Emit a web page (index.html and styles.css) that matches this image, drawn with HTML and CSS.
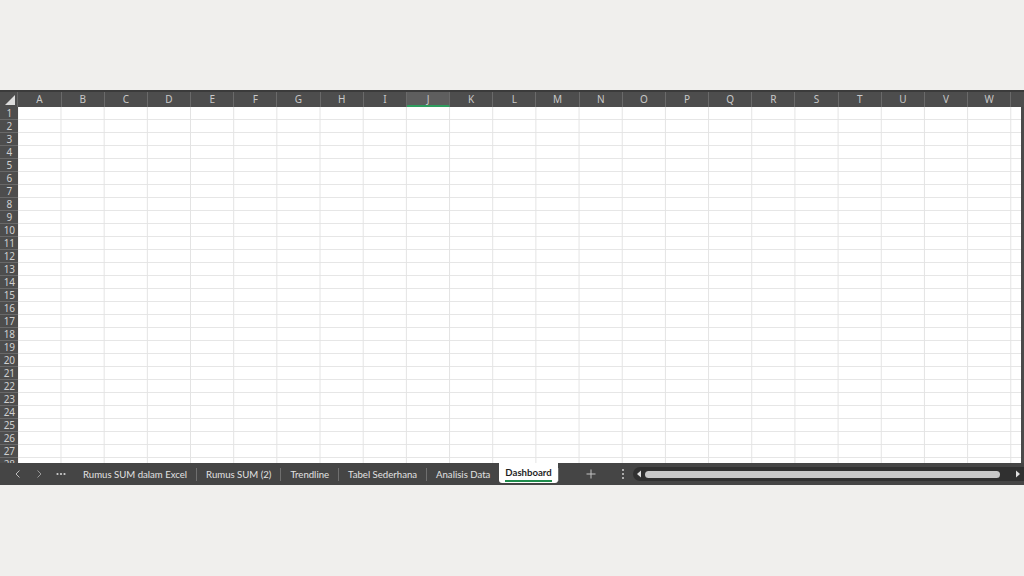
FILE: index.html
```html
<!DOCTYPE html>
<html>
<head>
<meta charset="utf-8">
<link rel="stylesheet" href="styles.css">
</head>
<body>
<div class="window">
  <div class="sheet">
    <div class="colheads">
      <div class="corner"><span class="tri"></span></div>
      <div class="ch">A</div><div class="ch">B</div><div class="ch">C</div><div class="ch">D</div>
      <div class="ch">E</div><div class="ch">F</div><div class="ch">G</div><div class="ch">H</div>
      <div class="ch">I</div><div class="ch sel">J</div><div class="ch">K</div><div class="ch">L</div>
      <div class="ch">M</div><div class="ch">N</div><div class="ch">O</div><div class="ch">P</div>
      <div class="ch">Q</div><div class="ch">R</div><div class="ch">S</div><div class="ch">T</div>
      <div class="ch">U</div><div class="ch">V</div><div class="ch">W</div><div class="ch"></div>
    </div>
    <div class="body">
      <div class="rowheads">
        <div class="rh">1</div><div class="rh">2</div><div class="rh">3</div><div class="rh">4</div>
        <div class="rh">5</div><div class="rh">6</div><div class="rh">7</div><div class="rh">8</div>
        <div class="rh">9</div><div class="rh">10</div><div class="rh">11</div><div class="rh">12</div>
        <div class="rh">13</div><div class="rh">14</div><div class="rh">15</div><div class="rh">16</div>
        <div class="rh">17</div><div class="rh">18</div><div class="rh">19</div><div class="rh">20</div>
        <div class="rh">21</div><div class="rh">22</div><div class="rh">23</div><div class="rh">24</div>
        <div class="rh">25</div><div class="rh">26</div><div class="rh">27</div><div class="rh">28</div>
      </div>
      <div class="cells"></div>
      <div class="vedge"></div>
    </div>
  </div>
  <div class="tabbar">
    <div class="nav">
      <span class="navbtn">
        <svg width="8" height="10" viewBox="0 0 8 10"><path d="M5.5 1.5 L2 5 L5.5 8.5" fill="none" stroke="#bdbdbd" stroke-width="1"/></svg>
      </span>
      <span class="navbtn">
        <svg width="8" height="10" viewBox="0 0 8 10"><path d="M2.5 1.5 L6 5 L2.5 8.5" fill="none" stroke="#9a9a9a" stroke-width="1"/></svg>
      </span>
      <span class="navbtn dots">
        <svg width="10" height="4" viewBox="0 0 10 4"><circle cx="1.5" cy="2" r="1.1" fill="#d0d0d0"/><circle cx="5" cy="2" r="1.1" fill="#d0d0d0"/><circle cx="8.5" cy="2" r="1.1" fill="#d0d0d0"/></svg>
      </span>
    </div>
    <div class="tabs">
      <span class="tab">Rumus SUM dalam Excel</span>
      <span class="sep"></span>
      <span class="tab">Rumus SUM (2)</span>
      <span class="sep"></span>
      <span class="tab">Trendline</span>
      <span class="sep"></span>
      <span class="tab">Tabel Sederhana</span>
      <span class="sep"></span>
      <span class="tab">Analisis Data</span>
      <span class="tab active"><span class="lbl">Dashboard</span></span>
      <span class="sep"></span>
    </div>
    <div class="add">
      <svg width="10" height="10" viewBox="0 0 10 10"><path d="M5 0.5 V9.5 M0.5 5 H9.5" stroke="#c4c4c4" stroke-width="1"/></svg>
    </div>
    <div class="more">
      <svg width="4" height="12" viewBox="0 0 4 12"><circle cx="2" cy="2" r="1" fill="#cfcfcf"/><circle cx="2" cy="6" r="1" fill="#cfcfcf"/><circle cx="2" cy="10" r="1" fill="#cfcfcf"/></svg>
    </div>
    <div class="hscroll">
      <svg class="arr" width="6" height="8" viewBox="0 0 6 8"><path d="M5 0.5 L1 4 L5 7.5 Z" fill="#e0e0e0"/></svg>
      <div class="thumb"></div>
      <svg class="arr" width="6" height="8" viewBox="0 0 6 8"><path d="M1 0.5 L5 4 L1 7.5 Z" fill="#e0e0e0"/></svg>
    </div>
  </div>
</div>
</body>
</html>
```

FILE: styles.css
```css
html, body {
  margin: 0;
  padding: 0;
}
body {
  background: #f0efed;
  width: 1024px;
  height: 576px;
  overflow: hidden;
  font-family: "Noto Sans", "Liberation Sans", sans-serif;
}
.window {
  margin-top: 90px;
  width: 1024px;
  height: 395px;
  display: flex;
  flex-direction: column;
  background: #4a4a4a;
}
.sheet {
  height: 373px;
  display: flex;
  flex-direction: column;
  overflow: hidden;
}
.colheads {
  height: 17px;
  flex: none;
  display: flex;
  background: #4d4d4d;
  border-top: 2px solid #3b3b3b;
  box-sizing: border-box;
}
.corner {
  width: 18.4px;
  flex: none;
  position: relative;
  border-right: 1px solid #666;
  box-sizing: border-box;
}
.tri {
  position: absolute;
  right: 2px;
  bottom: 2px;
  width: 0;
  height: 0;
  border-left: 10px solid transparent;
  border-bottom: 10px solid #dcdcdc;
}
.ch {
  width: 43.18px;
  flex: none;
  box-sizing: border-box;
  border-right: 1px solid #6a6a6a;
  color: #c9c9c9;
  font-size: 10px;
  line-height: 15px;
  text-align: center;
}
.ch.sel {
  background: #5e5e5e;
  border-bottom: 2px solid #2e9b5d;
  line-height: 14px;
}
.body {
  flex: 1;
  display: flex;
  overflow: hidden;
}
.rowheads {
  width: 18.4px;
  flex: none;
  background: #4d4d4d;
  display: flex;
  flex-direction: column;
}
.rh {
  height: 13px;
  flex: none;
  box-sizing: border-box;
  border-bottom: 1px solid #696969;
  color: #cfcfcf;
  font-size: 10px;
  line-height: 13px;
  text-align: center;
  letter-spacing: -0.3px;
}
.cells {
  flex: 1;
  background-color: #ffffff;
  background-image:
    linear-gradient(to right, #e3e3e3 1px, transparent 1px),
    linear-gradient(to bottom, #e6e6e6 1px, transparent 1px);
  background-size: 43.18px 13px;
  background-position: 42.5px 12px;
}
.vedge {
  width: 3px;
  flex: none;
  background: #4a4a4a;
}
.tabbar {
  height: 22px;
  flex: none;
  background: #454545;
  display: flex;
  align-items: center;
  font-family: Lato, "Liberation Sans", sans-serif;
  font-size: 9.6px;
  color: #e2e2e2;
}
.nav {
  display: flex;
  align-items: center;
  padding-left: 14px;
  gap: 13px;
  width: 69px;
  flex: none;
}
.navbtn {
  display: flex;
  align-items: center;
  justify-content: center;
  width: 8px;
}
.navbtn.dots {
  width: 10px;
}
.tabs {
  display: flex;
  align-items: center;
  height: 22px;
}
.tab {
  padding: 1px 9px 0;
  white-space: nowrap;
  line-height: 21px;
}
.tabs .tab:first-child {
  padding-left: 0;
}
.sep {
  width: 1px;
  height: 13px;
  background: #6e6e6e;
}
.tab.active {
  background: #ffffff;
  color: #1f1f1f;
  font-weight: 700;
  height: 20px;
  align-self: flex-start;
  line-height: 19px;
  padding: 0 6px;
  margin-left: 0;
  border-radius: 0 0 3px 3px;
}
.tab.active .lbl {
  display: inline-block;
  border-bottom: 2px solid #1e8c4c;
  line-height: 15px;
  padding-bottom: 0;
}
.add {
  width: 24px;
  margin-left: 20px;
  display: flex;
  justify-content: center;
}
.more {
  width: 4px;
  margin-left: 18px;
  display: flex;
}
.hscroll {
  margin-left: 8px;
  flex: 1;
  height: 14px;
  background: #303030;
  border-radius: 7px 0 0 7px;
  display: flex;
  align-items: center;
  padding: 0 3px 0 3px;
  gap: 3px;
}
.thumb {
  flex: 1;
  height: 7px;
  background: #c9c9c9;
  border-radius: 4px;
  margin-right: 12px;
}
```
